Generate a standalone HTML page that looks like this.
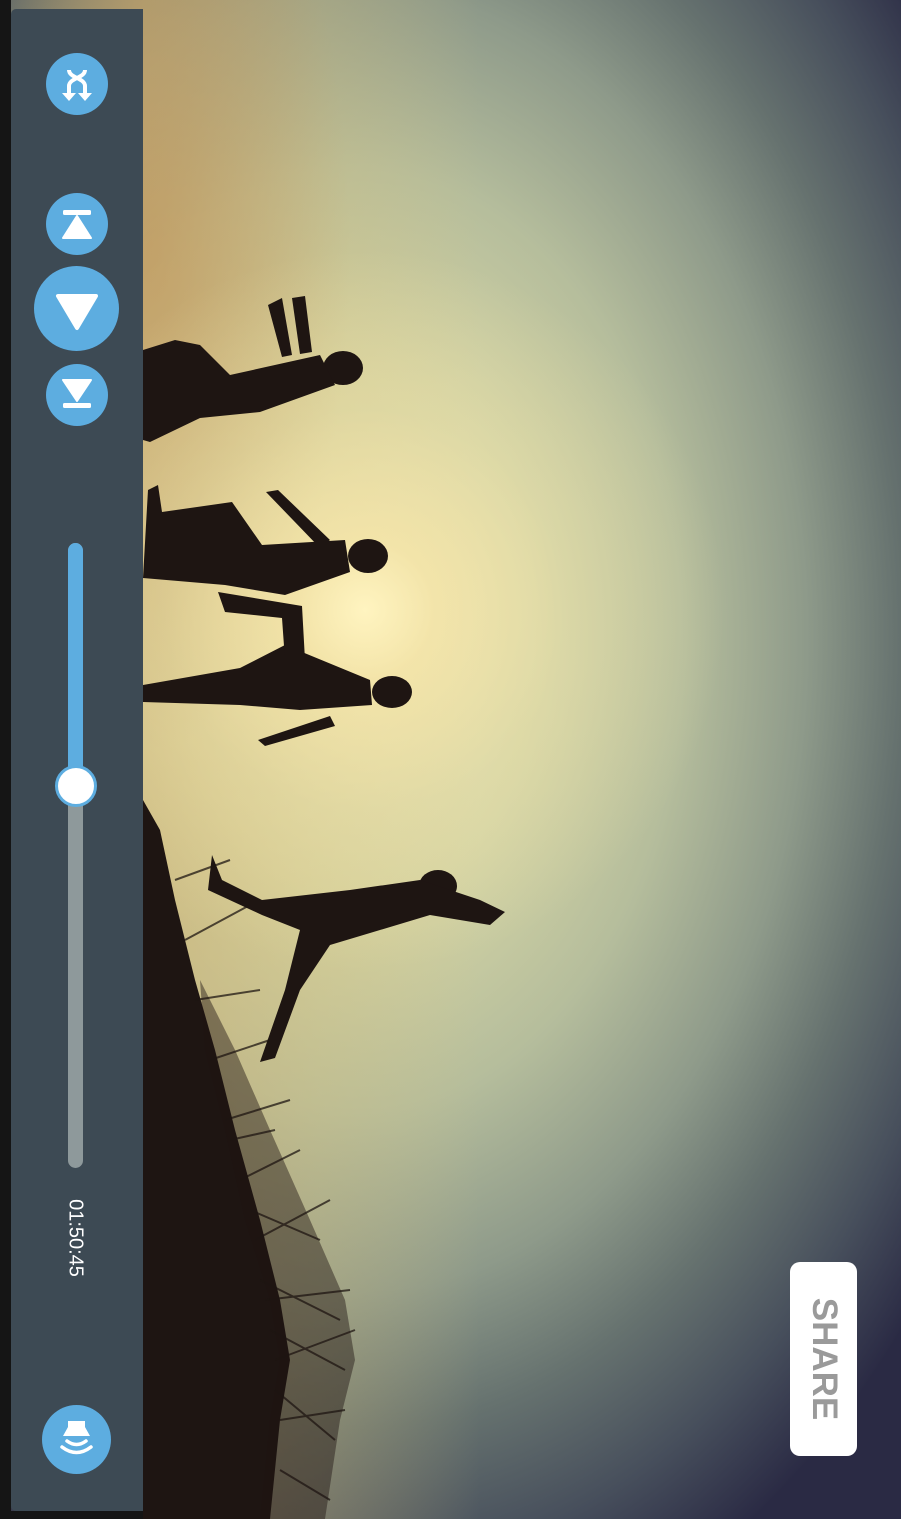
<!DOCTYPE html>
<html><head><meta charset="utf-8"><style>
html,body{margin:0;padding:0;width:901px;height:1519px;overflow:hidden;background:#111;}
#bg{position:absolute;left:0;top:0;width:901px;height:1519px;
background:
radial-gradient(circle at 365px 610px, rgba(255,244,192,1) 0px, rgba(246,230,170,0.85) 70px, rgba(235,225,170,0.4) 200px, rgba(220,220,170,0) 360px),
radial-gradient(ellipse 200px 500px at 150px 250px, rgba(190,140,80,0.5), rgba(190,140,80,0) 100%),
linear-gradient(90deg, rgba(215,180,110,0) 0px, rgba(215,180,110,0.55) 143px, rgba(215,190,120,0.3) 320px, rgba(215,190,120,0) 480px),
radial-gradient(ellipse 720px 1050px at 360px 640px, #e8e2b0 0%, #d4d4a4 25%, #b5bd9c 45%, #8e9a8a 62%, #66726f 75%, #474f5c 88%, #2a2a44 100%);}
.panel{position:absolute;left:11px;top:9px;width:132px;height:1502px;background:#3d4a54;border-radius:5px 0 0 5px;}
.btn{position:absolute;border-radius:50%;background:#5dade0;}
.time{position:absolute;left:75px;top:1238px;transform:translate(-50%,-50%) rotate(90deg);color:#fff;font:20px "Liberation Sans",sans-serif;white-space:nowrap;}
.share{position:absolute;left:790px;top:1262px;width:67px;height:194px;background:#fff;border-radius:10px;}
.share span{position:absolute;left:50%;top:50%;transform:translate(-50%,-50%) rotate(90deg);font:bold 35px "Liberation Sans",sans-serif;color:#9a9a9a;}
</style></head><body>
<div id="bg"></div>
<div style="position:absolute;left:0;top:0;width:11px;height:1519px;background:#151515"></div>
<div style="position:absolute;left:0;top:1511px;width:143px;height:8px;background:#151515"></div>
<svg style="position:absolute;left:0;top:0" width="901" height="1519">
<g fill="#1e1512">
<ellipse cx="343" cy="368" rx="20" ry="17"/>
<path d="M143 350 L175 340 L200 345 L230 375 L320 355 L335 385 L260 412 L200 418 L150 442 L143 440Z"/>
<path d="M268 305 L282 298 L292 355 L282 357Z M292 298 L305 296 L312 352 L300 354Z"/>
<ellipse cx="368" cy="556" rx="20" ry="17"/>
<path d="M148 490 L158 485 L162 512 L232 502 L262 545 L345 540 L350 572 L285 595 L225 585 L143 578Z"/>
<path d="M266 492 L278 490 L330 540 L320 548Z"/>
<ellipse cx="392" cy="692" rx="20" ry="16"/>
<path d="M143 685 L240 668 L285 645 L370 680 L372 705 L300 710 L240 705 L143 702Z"/>
<path d="M218 592 L302 606 L305 660 L285 660 L282 618 L225 612Z"/>
<path d="M258 740 L330 716 L335 726 L265 746Z"/>
<ellipse cx="438" cy="886" rx="19" ry="16"/>
<path d="M212 855 L222 880 L262 900 L350 890 L420 880 L480 900 L505 912 L490 925 L430 915 L380 930 L330 945 L300 990 L275 1058 L260 1062 L285 990 L300 930 L262 915 L208 890Z"/>
<path d="M143 800 L160 830 L175 900 L195 980 L215 1050 L235 1130 L260 1220 L280 1300 L290 1360 L280 1420 L270 1519 L143 1519Z"/>
</g>
<g stroke="#1e1512" stroke-width="2" fill="none" opacity="0.75">
<path d="M175 880 L230 860 M185 940 L250 905 M195 1000 L260 990 M210 1060 L270 1040 M225 1120 L290 1100 M240 1180 L300 1150 M255 1240 L330 1200 M265 1300 L350 1290 M275 1360 L355 1330 M280 1420 L345 1410 M280 1470 L330 1500 M230 1140 L275 1130 M250 1210 L320 1240 M260 1280 L340 1320 M270 1330 L345 1370 M275 1390 L335 1440"/>
</g>
<path d="M200 980 L235 1050 L270 1130 L310 1220 L345 1300 L355 1360 L340 1420 L325 1519 L260 1519 L270 1420 L280 1360 L270 1300 L245 1220 L225 1130 L205 1050Z" fill="#1e1512" opacity="0.45"/>
</svg>
<div class="panel"></div>
<div class="btn" style="left:46px;top:53px;width:62px;height:62px"></div>
<svg style="position:absolute;left:46px;top:53px" width="62" height="62" viewBox="0 0 62 62">
<g fill="none" stroke="#fff" stroke-width="4"><path d="M23 17 C23 25 39 25 39 33 L39 42"/><path d="M39 17 C39 25 23 25 23 33 L23 42"/></g>
<g fill="#fff"><path d="M16 40 L30 40 L23 48Z"/><path d="M32 40 L46 40 L39 48Z"/></g>
</svg>
<div class="btn" style="left:46px;top:193px;width:62px;height:62px"></div>
<svg style="position:absolute;left:46px;top:193px" width="62" height="62" viewBox="0 0 62 62"><g fill="#fff"><rect x="17" y="17" width="28" height="5" rx="1.5"/><path d="M31 23 L45 45 L17 45Z" stroke="#fff" stroke-width="2" stroke-linejoin="round"/></g></svg>
<div class="btn" style="left:34px;top:266px;width:85px;height:85px"></div>
<svg style="position:absolute;left:34px;top:266px" width="85" height="85" viewBox="0 0 85 85"><path d="M24 30 L62 30 L43 62Z" fill="#fff" stroke="#fff" stroke-width="4" stroke-linejoin="round"/></svg>
<div class="btn" style="left:46px;top:364px;width:62px;height:62px"></div>
<svg style="position:absolute;left:46px;top:364px" width="62" height="62" viewBox="0 0 62 62"><g fill="#fff"><path d="M17 16 L45 16 L31 37Z" stroke="#fff" stroke-width="2" stroke-linejoin="round"/><rect x="17" y="39" width="28" height="5" rx="1.5"/></g></svg>
<div style="position:absolute;left:68px;top:543px;width:15px;height:625px;border-radius:8px;background:#8e999b"></div>
<div style="position:absolute;left:68px;top:543px;width:15px;height:245px;border-radius:8px 8px 0 0;background:#5dade0"></div>
<div style="position:absolute;left:55px;top:765px;width:36px;height:36px;border-radius:50%;background:#fff;border:3px solid #5dade0"></div>
<div class="time">01:50:45</div>
<div class="btn" style="left:42px;top:1405px;width:69px;height:69px"></div>
<svg style="position:absolute;left:42px;top:1405px" width="69" height="69" viewBox="0 0 69 69"><g fill="#fff"><path d="M26 16 L43 16 L43 22 L48 31 L21 31 L26 22Z"/></g><g fill="none" stroke="#fff" stroke-width="3.5" stroke-linecap="round"><path d="M25 36 Q34.5 43 44 36"/><path d="M20 42 Q34.5 53 49 42"/></g></svg>
<div class="share"><span>SHARE</span></div>
</body></html>
